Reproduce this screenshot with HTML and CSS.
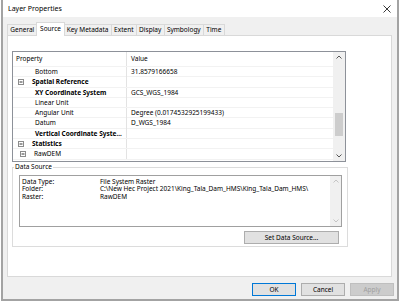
FILE: index.html
```html
<!DOCTYPE html>
<html lang="en">
<head>
  <meta charset="UTF-8">
  <title>Layer Properties</title>
  <link rel="stylesheet" href="styles.css">
</head>
<body>
  <div class="window">
    <div class="titlebar">
      <span class="title">Layer Properties</span>
      <svg class="close" width="8" height="8" viewBox="0 0 8 8"><path d="M0.5 0.5 L7.5 7.5 M7.5 0.5 L0.5 7.5" stroke="#222" stroke-width="0.9" fill="none"/></svg>
    </div>

    <div class="dialog">
      <div class="tabs">
        <div class="tab">General</div>
        <div class="tab active">Source</div>
        <div class="tab">Key Metadata</div>
        <div class="tab">Extent</div>
        <div class="tab">Display</div>
        <div class="tab">Symbology</div>
        <div class="tab">Time</div>
      </div>

      <div class="panel">
        <div class="grid">
          <div class="grid-rows">
            <div class="row head"><span class="name">Property</span><span class="value">Value</span></div>
            <div class="row"><span class="name sub">Bottom</span><span class="value">31.8579166658</span></div>
            <div class="row cat"><span class="name"><svg class="toggle" width="6" height="6" viewBox="0 0 6 6"><rect x="0.5" y="0.5" width="5" height="5" fill="#fff" stroke="#8c8c8c"/><path d="M1.5 3 H4.5" stroke="#333"/></svg>Spatial Reference</span><span class="value"></span></div>
            <div class="row"><span class="name sub bold">XY Coordinate System</span><span class="value">GCS_WGS_1984</span></div>
            <div class="row"><span class="name sub">Linear Unit</span><span class="value"></span></div>
            <div class="row"><span class="name sub">Angular Unit</span><span class="value">Degree (0.0174532925199433)</span></div>
            <div class="row"><span class="name sub">Datum</span><span class="value">D_WGS_1984</span></div>
            <div class="row"><span class="name sub bold">Vertical Coordinate Syste...</span><span class="value"></span></div>
            <div class="row cat"><span class="name"><svg class="toggle" width="6" height="6" viewBox="0 0 6 6"><rect x="0.5" y="0.5" width="5" height="5" fill="#fff" stroke="#8c8c8c"/><path d="M1.5 3 H4.5" stroke="#333"/></svg>Statistics</span><span class="value"></span></div>
            <div class="row"><span class="name item"><svg class="toggle" width="6" height="6" viewBox="0 0 6 6"><rect x="0.5" y="0.5" width="5" height="5" fill="#fff" stroke="#8c8c8c"/><path d="M1.5 3 H4.5" stroke="#333"/></svg>RawDEM</span><span class="value"></span></div>
          </div>
          <div class="vscroll">
            <svg class="arrow" width="6" height="4" viewBox="0 0 6 4"><path d="M0.5 3.5 L3 1 L5.5 3.5" stroke="#555" fill="none"/></svg>
            <div class="track"><div class="thumb"></div></div>
            <svg class="arrow" width="6" height="4" viewBox="0 0 6 4"><path d="M0.5 0.5 L3 3 L5.5 0.5" stroke="#555" fill="none"/></svg>
          </div>
        </div>

        <fieldset class="group">
          <legend>Data Source</legend>
          <div class="textbox">
            <div class="lines">
              <div class="line"><span class="label">Data Type:</span><span>File System Raster</span></div>
              <div class="line"><span class="label">Folder:</span><span>C:\New Hec Project 2021\King_Tala_Dam_HMS\King_Tala_Dam_HMS\</span></div>
              <div class="line"><span class="label">Raster:</span><span>RawDEM</span></div>
            </div>
            <div class="vscroll off">
              <svg class="arrow" width="6" height="4" viewBox="0 0 6 4"><path d="M0.5 3.5 L3 1 L5.5 3.5" stroke="#c4c4c4" fill="none"/></svg>
              <div class="track"></div>
              <svg class="arrow" width="6" height="4" viewBox="0 0 6 4"><path d="M0.5 0.5 L3 3 L5.5 0.5" stroke="#c4c4c4" fill="none"/></svg>
            </div>
          </div>
          <div class="group-actions">
            <button class="btn wide">Set Data Source...</button>
          </div>
        </fieldset>
      </div>

      <div class="footer">
        <button class="btn default">OK</button>
        <button class="btn">Cancel</button>
        <button class="btn" disabled>Apply</button>
      </div>
    </div>
  </div>
</body>
</html>
```

FILE: styles.css
```css
body {
  margin: 0;
  background: #fff;
  font-family: "Noto Sans", "DejaVu Sans", sans-serif;
  font-size: 6.5px;
  color: #000;
}
.window {
  box-sizing: border-box;
  margin-left: 1px;
  width: 398px;
  height: 301px;
  border: 2px solid #a3a3a3;
  border-top: 0;
  display: flex;
  flex-direction: column;
}
.titlebar {
  height: 17px;
  background: #fff;
  display: flex;
  align-items: center;
  justify-content: space-between;
  padding: 0 5px 0 5px;
}
.title {
  font-size: 7px;
}
.close {
  margin-right: 1px;
}
.dialog {
  flex: 1;
  background: #f0f0f0;
  padding: 5px 0 0 4px;
  display: flex;
  flex-direction: column;
}
.tabs {
  display: flex;
  align-items: flex-end;
  height: 13px;
  position: relative;
  z-index: 1;
}
.tab {
  box-sizing: border-box;
  height: 11px;
  line-height: 10px;
  padding: 0 2.3px;
  border: 1px solid #d9d9d9;
  border-bottom: 0;
  margin-right: -1px;
  background: #f0f0f0;
}
.tab.active {
  height: 14px;
  margin-bottom: -1px;
  margin-left: -1px;
  margin-right: -2px;
  padding: 0 3.5px;
  background: #fff;
  line-height: 11px;
  position: relative;
  z-index: 2;
}
.panel {
  box-sizing: border-box;
  height: 242px;
  margin-right: 5px;
  background: #fff;
  border: 1px solid #d9d9d9;
  padding: 15px 0 0 4px;
}
.grid {
  box-sizing: border-box;
  width: 334px;
  height: 111px;
  border: 1px solid #8d9199;
  display: flex;
}
.grid-rows {
  flex: 1;
  overflow: hidden;
}
.row {
  display: grid;
  grid-template-columns: 114px 1fr;
  height: 10.3px;
  line-height: 10.3px;
  border-bottom: 1px solid #f2f2f2;
  box-sizing: border-box;
  white-space: nowrap;
}
.row.head {
  height: 15px;
  line-height: 14px;
}
.row .name {
  border-right: 1px solid #e3e3e3;
  padding-left: 3px;
  overflow: hidden;
}
.row .name.sub {
  padding-left: 22px;
}
.row .value {
  padding-left: 4px;
}
.row.cat .name,
.bold {
  font-weight: bold;
}
.row.cat .name {
  padding-left: 5px;
}
.row .name.item {
  padding-left: 7px;
}
.toggle {
  vertical-align: -0.5px;
  margin-right: 8px;
}
.vscroll {
  width: 12px;
  background: #f0f0f0;
  display: flex;
  flex-direction: column;
  align-items: center;
}
.vscroll .arrow {
  margin: 3px 0;
}
.vscroll .track {
  flex: 1;
  width: 100%;
  position: relative;
}
.thumb {
  position: absolute;
  left: 2px;
  right: 2px;
  top: 51px;
  height: 23px;
  background: #cdcdcd;
}
.group {
  box-sizing: border-box;
  width: 336px;
  margin: 0;
  padding: 3px 5px 2px 6px;
  border: 1px solid #dcdcdc;
}
.group legend {
  padding: 0 1px;
  margin-left: -5px;
  line-height: 10px;
}
.textbox {
  box-sizing: border-box;
  width: 323px;
  height: 52px;
  border: 1px solid #a0a0a0;
  display: flex;
}
.lines {
  flex: 1;
  padding: 1.5px 0 0 2px;
  white-space: nowrap;
  overflow: hidden;
}
.line {
  line-height: 7.5px;
  display: flex;
}
.line .label {
  width: 78px;
}
.textbox .vscroll {
  width: 11px;
}
.group-actions {
  display: flex;
  justify-content: flex-end;
  padding: 4px 3px 0 0;
}
.btn {
  box-sizing: border-box;
  font-family: inherit;
  font-size: 6.5px;
  height: 13px;
  width: 44px;
  padding: 0;
  background: #e1e1e1;
  border: 1px solid #adadad;
  color: #000;
}
.btn.wide {
  width: 95px;
}
.btn.default {
  border: 1px solid #0078d7;
}
.btn:disabled {
  background: #cccccc;
  border-color: #bfbfbf;
  color: #a0a0a0;
}
.footer {
  display: flex;
  justify-content: flex-end;
  gap: 5px;
  padding: 6px 3px 0 0;
}
```
